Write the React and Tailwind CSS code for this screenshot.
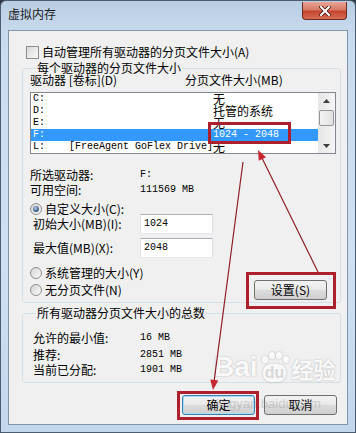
import React from 'react';

const cjk = "font-['Noto_Sans_CJK_SC',sans-serif]";
const mono = "font-['Liberation_Mono','Noto_Sans_CJK_SC',monospace]";

const drives = [
  { d: 'C:', label: '', size: '无' },
  { d: 'D:', label: '', size: '托管的系统' },
  { d: 'E:', label: '', size: '无' },
  { d: 'F:', label: '', size: '1024 - 2048', selected: true },
  { d: 'L:', label: '[FreeAgent GoFlex Drive]', size: '无' },
];

function Radio({ checked }) {
  return (
    <span className="flex h-[12px] w-[12px] shrink-0 items-center justify-center rounded-full border border-[#8e8f8f] bg-gradient-to-br from-[#d4d4d4] to-[#fbfbfb]">
      {checked && (
        <span className="h-[6px] w-[6px] rounded-full bg-[radial-gradient(circle_at_40%_35%,#b7cde6,#2c5280_70%)]" />
      )}
    </span>
  );
}

function Button({ children, primary, className = '' }) {
  return (
    <div
      className={`flex h-[20px] w-[73px] items-center justify-center rounded-[3px] border ${
        primary ? 'border-[#3c7fb1] shadow-[inset_0_0_0_1px_#a6dcf5]' : 'border-[#707070]'
      } bg-[linear-gradient(#f2f2f2_0%,#ebebeb_45%,#dddddd_50%,#cfcfcf_100%)] text-[12px] leading-[14px] text-black ${className}`}
    >
      {children}
    </div>
  );
}

function InfoRow({ label, value, className = '' }) {
  return (
    <div className={`flex h-[14px] items-center ${className}`}>
      <span className={`w-[110px] pl-[3px] ${cjk} text-[12px] leading-[14px]`}>{label}</span>
      <span className={`${mono} text-[10px] leading-[14px]`}>{value}</span>
    </div>
  );
}

export default function App() {
  return (
    <div className={`relative h-[433px] w-[356px] overflow-hidden bg-[#2c3a48] ${cjk} text-black`}>
      <div className="flex h-full w-full flex-col rounded-t-[6px] border border-[#4b5d70] bg-[linear-gradient(180deg,#b9cde3_0%,#c9dbee_8%,#cfe0f2_60%,#c3d7ec_100%)]">
        {/* title bar */}
        <div className="flex h-[29px] shrink-0 items-start justify-between">
          <span className="pl-[7px] pt-[6px] text-[12px] leading-[14px] text-[#1b1b1b]">虚拟内存</span>
          <div className="mr-[8px] mt-[1px] flex h-[18px] w-[45px] items-center justify-center rounded-b-[4px] border border-t-0 border-[#6b2c22] bg-[linear-gradient(#e8a595_0%,#d77966_45%,#c5452f_55%,#d66d54_100%)]">
            <svg width="12" height="10" viewBox="0 0 12 10">
              <path d="M2 1 L10 9 M10 1 L2 9" stroke="#4a1a12" strokeWidth="3.6" strokeLinecap="square" />
              <path d="M2 1 L10 9 M10 1 L2 9" stroke="#ffffff" strokeWidth="2" strokeLinecap="square" />
            </svg>
          </div>
        </div>

        {/* client area */}
        <div className="mx-[7px] mb-[7px] flex flex-1 flex-col border border-[#8196ab] bg-[#f0f0f0]">
          <div className="ml-[17px] mt-[14px] flex h-[14px] items-center gap-[3px]">
            <span className="h-[13px] w-[13px] border border-[#8e8f8f] bg-gradient-to-br from-[#d8d8d8] to-[#fafafa]" />
            <span className="text-[12px] leading-[14px]">自动管理所有驱动器的分页文件大小(A)</span>
          </div>

          {/* group 1 */}
          <fieldset className="ml-[13px] mt-[2px] w-[319px] rounded-[3px] border border-[#d5dfe5] pb-[2px] pl-[7px] pr-[4px]">
            <legend className="ml-[6px] px-[1px] text-[12px] leading-[14px]">每个驱动器的分页文件大小</legend>
            <div className="-mt-[1px] flex h-[12px] items-center text-[12px] leading-[12px]">
              <span className="w-[155px]">驱动器 [卷标](D)</span>
              <span>分页文件大小(MB)</span>
            </div>

            <div className="mt-[6px] flex h-[62px] border border-[#828790] bg-white">
              <div className="flex-1">
                {drives.map((r) => (
                  <div
                    key={r.d}
                    className={`flex h-[12px] items-center ${r.selected ? 'bg-[#3399ff] text-white' : ''}`}
                  >
                    <span className={`w-[182px] pl-[2px] ${mono} text-[10px] leading-[12px] whitespace-pre`}>
                      {r.d}
                      {r.label ? '    ' + r.label : ''}
                    </span>
                    <span
                      className={`${/\d/.test(r.size) ? mono + ' text-[10px]' : 'text-[12px]'} leading-[12px] whitespace-pre`}
                    >
                      {r.size}
                    </span>
                  </div>
                ))}
              </div>
              <div className="flex w-[17px] flex-col items-center bg-[linear-gradient(90deg,#e6e6e6,#f5f5f5)]">
                <div className="flex h-[15px] w-full items-center justify-center">
                  <svg width="7" height="4" viewBox="0 0 7 4">
                    <path d="M0 4 L3.5 0 L7 4 Z" fill="#3d3d3d" />
                  </svg>
                </div>
                <div className="mt-[2px] h-[16px] w-[15px] rounded-[2px] border border-[#959595] bg-[linear-gradient(90deg,#f3f3f3,#e2e2e2)]" />
                <div className="flex-1" />
                <div className="flex h-[15px] w-full items-center justify-center">
                  <svg width="7" height="4" viewBox="0 0 7 4">
                    <path d="M0 0 L3.5 4 L7 0 Z" fill="#3d3d3d" />
                  </svg>
                </div>
              </div>
            </div>

            <div className="mt-[14px] flex h-[14px] items-center">
              <span className="w-[110px] text-[12px] leading-[14px]">所选驱动器:</span>
              <span className={`${mono} text-[10px] leading-[14px]`}>F:</span>
            </div>
            <div className="mt-[1px] flex h-[14px] items-center">
              <span className="w-[110px] text-[12px] leading-[14px]">可用空间:</span>
              <span className={`${mono} text-[10px] leading-[14px]`}>111569 MB</span>
            </div>

            <div className="mt-[6px] flex h-[12px] items-center gap-[3px]">
              <Radio checked />
              <span className="text-[12px] leading-[12px]">自定义大小(C):</span>
            </div>
            <div className="-mt-[1px] flex h-[20px] items-center">
              <span className="w-[110px] pl-[3px] text-[12px] leading-[14px]">初始大小(MB)(I):</span>
              <div className="flex h-[20px] w-[73px] items-center border border-[#abadb3] border-l-[#e2e3ea] border-r-[#dbdfe6] border-b-[#e3e9ef] bg-white pl-[3px]">
                <span className={`${mono} text-[10px] leading-[12px]`}>1024</span>
              </div>
            </div>
            <div className="mt-[4px] flex h-[20px] items-center">
              <span className="w-[110px] pl-[3px] text-[12px] leading-[14px]">最大值(MB)(X):</span>
              <div className="flex h-[20px] w-[73px] items-center border border-[#abadb3] border-l-[#e2e3ea] border-r-[#dbdfe6] border-b-[#e3e9ef] bg-white pl-[3px]">
                <span className={`${mono} text-[10px] leading-[12px]`}>2048</span>
              </div>
            </div>

            <div className="mt-[9px] flex items-start justify-between">
              <div className="flex flex-col">
                <div className="flex h-[12px] items-center gap-[3px]">
                  <Radio />
                  <span className="text-[12px] leading-[12px]">系统管理的大小(Y)</span>
                </div>
                <div className="mt-[5px] flex h-[12px] items-center gap-[3px]">
                  <Radio />
                  <span className="text-[12px] leading-[12px]">无分页文件(N)</span>
                </div>
              </div>
              <Button className="mr-[9px] mt-[13px]">设置(S)</Button>
            </div>
          </fieldset>

          {/* group 2 */}
          <fieldset className="ml-[13px] mt-[3px] w-[319px] rounded-[3px] border border-[#d5dfe5] pb-[5px] pl-[7px] pr-[4px]">
            <legend className="ml-[6px] px-[1px] text-[12px] leading-[14px]">所有驱动器分页文件大小的总数</legend>
            <InfoRow label="允许的最小值:" value="16 MB" className="mt-[11px]" />
            <InfoRow label="推荐:" value="2851 MB" className="mt-[3px]" />
            <InfoRow label="当前已分配:" value="1901 MB" className="mt-[1px]" />
          </fieldset>

          <div className="mr-[10px] mt-[12px] flex justify-end gap-[9px]">
            <Button primary>确定</Button>
            <Button>取消</Button>
          </div>
        </div>
      </div>

      {/* Baidu watermark */}
      <div className="pointer-events-none absolute left-[214px] top-[352px] flex items-end gap-[2px] opacity-60">
        <span className="font-['Liberation_Sans',sans-serif] text-[28px] font-bold leading-[30px] text-white [text-shadow:0_0_2px_#8a8a8a]">
          Bai
        </span>
        <span className="relative flex h-[26px] w-[30px] items-end justify-center">
          <span className="absolute left-[2px] top-[0px] h-[7px] w-[6px] rounded-full bg-white shadow-[0_0_2px_#8a8a8a]" />
          <span className="absolute left-[9px] top-[-4px] h-[7px] w-[6px] rounded-full bg-white shadow-[0_0_2px_#8a8a8a]" />
          <span className="absolute left-[16px] top-[-4px] h-[7px] w-[6px] rounded-full bg-white shadow-[0_0_2px_#8a8a8a]" />
          <span className="absolute left-[23px] top-[0px] h-[7px] w-[6px] rounded-full bg-white shadow-[0_0_2px_#8a8a8a]" />
          <span className="relative rounded-[8px] bg-white px-[2px] font-['Liberation_Sans',sans-serif] text-[16px] font-bold leading-[18px] text-[#c9c9c9] shadow-[0_0_2px_#8a8a8a]">
            du
          </span>
        </span>
        <span className="text-[22px] font-bold leading-[28px] text-white [text-shadow:0_0_2px_#8a8a8a]">经验</span>
      </div>
      <span className="pointer-events-none absolute left-[216px] top-[397px] font-['Liberation_Sans',sans-serif] text-[13px] leading-[14px] text-[#9a9a9a] opacity-40">
        jingyan.baidu.com
      </span>

      {/* red annotations */}
      <svg className="pointer-events-none absolute left-0 top-0" width="356" height="433" viewBox="0 0 356 433">
        <rect x="209.5" y="123.5" width="80" height="19" fill="none" stroke="#ad1f2d" strokeWidth="3" />
        <rect x="247.5" y="273.5" width="87" height="34" fill="none" stroke="#ad1f2d" strokeWidth="3" />
        <rect x="178.5" y="392.5" width="79" height="26" fill="none" stroke="#ad1f2d" strokeWidth="3" />
        <line x1="243" y1="162" x2="214" y2="382" stroke="#8e1f24" strokeWidth="1.2" />
        <polygon points="213,390 218.3,380.6 210.3,379.6" fill="#c8262c" />
        <line x1="318" y1="272" x2="262" y2="158" stroke="#8e1f24" strokeWidth="1.2" />
        <polygon points="258,150 266,157.2 258.8,160.8" fill="#c8262c" />
      </svg>
    </div>
  );
}
